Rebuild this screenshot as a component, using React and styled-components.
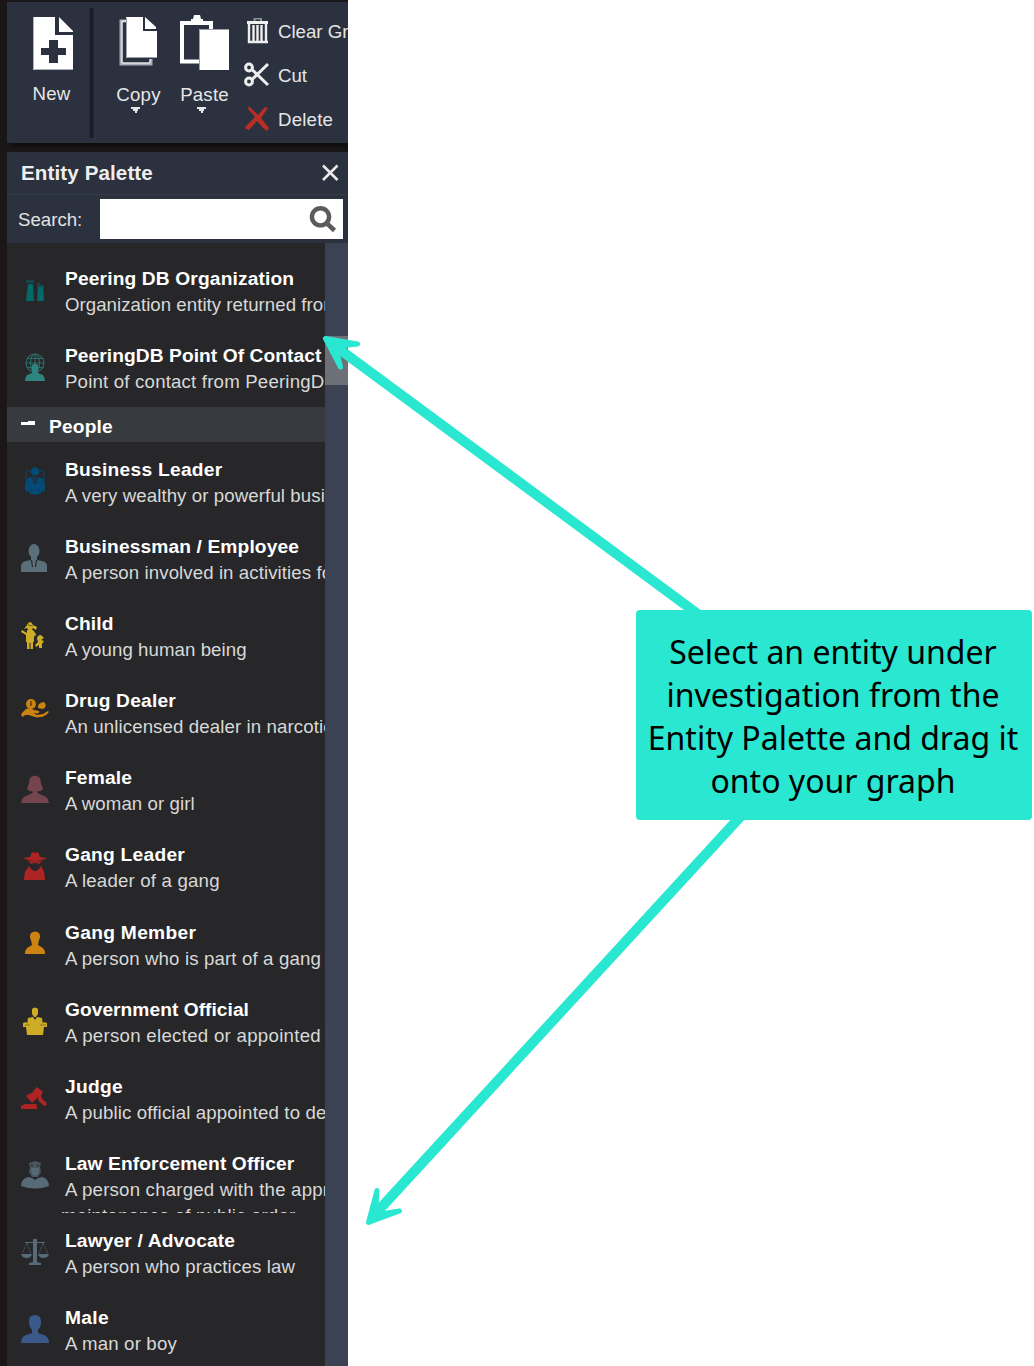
import React from "react";
import styled, { createGlobalStyle } from "styled-components";

const Global = createGlobalStyle`
  * { box-sizing: border-box; }
  body { margin: 0; background: #fff; }
`;

const Page = styled.main`
  position: relative;
  width: 1034px;
  height: 1366px;
  overflow: hidden;
  background: #fff;
  font-family: "Liberation Sans", Arial, sans-serif;
  font-size: 18.67px;
`;

const AppWindow = styled.section`
  display: flex;
  flex-direction: column;
  gap: 9px;
  width: 348px;
  height: 1366px;
  padding: 2px 0 0 7px;
  overflow: hidden;
  background: #1b1719;
`;

const Toolbar = styled.div`
  display: flex;
  flex: none;
  width: 341px;
  height: 141px;
  overflow: hidden;
  background: #2b313f;
  color: #e6e6e6;
  box-shadow: 3px 3px 5px #0c0c0f;
`;

const Tool = styled.div`
  display: flex;
  flex: none;
  flex-direction: column;
  align-items: center;
  width: ${(p) => p.$width}px;
  padding-top: 12px;
`;

const ToolLabel = styled.span`
  margin-top: ${(p) => p.$top || 0}px;
  line-height: 22px;
  letter-spacing: 0.2px;
  white-space: nowrap;
`;

const CaretBox = styled.div`
  margin: 0 7px 0 0;
  shape-rendering: crispEdges;
`;

const Divider = styled.div`
  flex: none;
  width: 5px;
  height: 130px;
  margin: 6px 14px 0 -7px;
  border: solid #232836;
  border-width: 0 1px;
  background: #191e2b;
`;

const Actions = styled.div`
  display: flex;
  flex: none;
  flex-direction: column;
  padding: 8px 0 0 3px;
`;

const Action = styled.div`
  display: flex;
  align-items: center;
  gap: 7px;
  height: 44px;
  letter-spacing: ${(p) => p.$ls || 0}px;
  white-space: nowrap;
`;

const Palette = styled.div`
  display: flex;
  flex: 1;
  flex-direction: column;
  min-height: 0;
`;

const PaletteHeader = styled.header`
  display: flex;
  align-items: center;
  justify-content: space-between;
  height: 43px;
  padding: 0 9px 1px 14px;
  border-bottom: 1px solid #353c49;
  background: #2b313f;
  color: #eee;
  font-size: 20.6px;
  font-weight: 700;
  letter-spacing: 0.1px;
`;

const SearchRow = styled.div`
  display: flex;
  align-items: center;
  justify-content: space-between;
  height: 48px;
  padding: 0 5px 0 11px;
  background: #2b313f;
  color: #e2e2e2;
`;

const SearchLabel = styled.label`
  padding-top: 2px;
`;

const SearchBox = styled.div`
  display: flex;
  align-items: center;
  justify-content: flex-end;
  width: 243px;
  height: 40px;
  margin-bottom: 1px;
  padding-right: 6px;
  background: #fff;
`;

const Body = styled.div`
  display: flex;
  flex: 1;
  min-height: 0;
`;

const List = styled.div`
  flex: none;
  width: 318px;
  padding-top: 8px;
  overflow: hidden;
  background: #272729;
`;

const ScrollTrack = styled.div`
  width: 23px;
  padding-top: 93px;
  background: #3b4253;
`;

const ScrollThumb = styled.div`
  height: 49px;
  background: #6d7077;
`;

const Row = styled.article`
  display: flex;
  height: 77.1px;
  padding-left: 14px;
  overflow: hidden;
`;

const IconCell = styled.div`
  flex: none;
  width: 28px;
  height: 28px;
  margin: 25px 16px 0 0;
  color: ${(p) => p.$color};
`;

const RowText = styled.div`
  flex: none;
  padding-top: 15px;
  white-space: nowrap;
`;

const Title = styled.div`
  color: #fff;
  font-size: 19.2px;
  font-weight: 700;
  line-height: 26px;
  letter-spacing: ${(p) => p.$ls || 0}px;
`;

const Desc = styled.div`
  color: #d8d8d8;
  line-height: 26.5px;
  letter-spacing: ${(p) => p.$ls || 0}px;
`;

const DescMore = styled(Desc)`
  margin-left: -4px;
`;

const Section = styled.div`
  display: flex;
  align-items: center;
  gap: 14px;
  height: 35px;
  margin-top: 1.8px;
  padding: 5px 0 0 14px;
  background: #373a3f;
  color: #fff;
  font-size: 19.2px;
  font-weight: 700;
  letter-spacing: 0.15px;
`;

const Arrows = styled.svg`
  position: absolute;
  top: 0;
  left: 0;
  pointer-events: none;
`;

const Callout = styled.aside`
  position: absolute;
  top: 610px;
  left: 636px;
  width: 396px;
  height: 210px;
  padding: 19.5px 2px 0 0;
  border-radius: 4px;
  background: #29e7d0;
  color: #000;
  font-family: "Noto Sans", sans-serif;
  font-size: 32px;
  line-height: 43px;
  text-align: center;
  white-space: nowrap;
`;

const Svg = ({ w = 28, h = 28, children }) => (
  <svg width={w} height={h} viewBox={`0 0 ${w} ${h}`} fill="currentColor" display="block">
    {children}
  </svg>
);

const icons = {
  factory: (
    <>
      <path d="M5 4H13V7H5ZM16 7H19L20 9H23V12H16Z" opacity=".45" />
      <path d="M7 8H12L13 25H5ZM17 11H22L23 25H16Z" />
    </>
  ),
  globePerson: (
    <>
      <g fill="none" stroke="currentColor" strokeWidth="1.2" opacity=".75">
        <circle cx="14" cy="10" r="9" />
        <ellipse cx="14" cy="10" rx="4.5" ry="9" />
        <path d="M5 10H23M6 5.500H22M6 14.500H22M14 1V19" />
      </g>
      <path d="M11 12Q14 9 17 12V20L22 22Q23.500 24 24 28H4Q4.500 24 6 22L11 20Z" />
    </>
  ),
  leader: (
    <>
      <circle cx="14" cy="4.500" r="4.300" />
      <path d="M9 4H6.500Q5 4 5 6V14M19 4H21.500Q23 4 23 6V14" fill="none" stroke="currentColor" strokeWidth="1" />
      <path d="M10 10H18V15H10Z" opacity=".5" />
      <path d="M6 12L10 10L12 15L14 17L16 15L18 10L22 12Q26 20 23 25L20 24V26L16 28L14 27L12 28L8 26V24L5 25Q2 20 6 12Z" />
      <path d="M9 21L12 24M19 21L16 24" stroke="#272729" opacity=".5" />
    </>
  ),
  employee: (
    <>
      <ellipse cx="13" cy="7" rx="5.500" ry="7" />
      <path d="M10 12H16V16L21 17Q26 18 26 22V28H0V22Q0 18 5 17L10 16Z" />
      <path d="M10.500 16L11.500 23M15.500 16L14.500 23" fill="none" stroke="#272729" strokeWidth="1.200" />
    </>
  ),
  child: (
    <>
      <path d="M6 4Q9-2 12 4L16 6L15 9L12 7L10 10H8L6 7L3 8Z" />
      <path d="M6 9H12L15 13L14 16L13 14V21H12V28H9.500V22H8.500V28H6V21H5V14L0 11L1 9L6 12Z" />
      <path d="M16 18Q16 14 20 14L23 17L20 19L23 20L21 23V27H18V24L15 26L14 24L17 21ZM22 15L24 17" />
      <path d="M7 4L12 5" stroke="#272729" opacity=".6" />
    </>
  ),
  dealer: (
    <>
      <circle cx="10" cy="6" r="5" />
      <path d="M10 3V8" stroke="#272729" strokeWidth="1.500" opacity=".75" />
      <path d="M17 10Q16 5 23 4Q27 8 22 11Z" />
      <path d="M1 15L5 11Q9 9 13 12L18 13Q19 15 16 15.500L12 15L16 17L22 16L27 13Q29 14 25 17Q21 20 14 19L8 17H4L2 19L0 17Z" />
    </>
  ),
  female: <path d="M9 3Q14-2 19 3Q20 9 22 14Q20 17 16.500 16V18L23 21Q27 22 28 28H0Q1 22 5 21L11.500 18V16Q8 17 6 14Q8 9 9 3Z" />,
  gangLeader: (
    <>
      <path d="M9 5L11 0L14 1L17 0L19 5L26 6Q21 9 14 9Q7 9 2 6Z" />
      <path d="M7 9H21L18 12L14 11L10 12Z" opacity=".85" />
      <path d="M8 14L10 17L13 19H15L18 17L20 14Q24 19 24 28H3Q3 20 6 17Z" />
    </>
  ),
  gangMember: <path d="M10 3Q14 0 18 3Q20 7 18 10L17 15L22 18Q24 20 24 24H4Q4 20 6 18L11 15L10 10Q8 7 10 3Z" />,
  official: (
    <>
      <path d="M11 2Q14-1 17 2V7L15 10H13L11 7Z" />
      <path d="M7 11L12 10L14 13L16 10L21 11L22 18H6Z" />
      <path d="M2 16L5 15L8 18H20L23 15L26 16V20H23L22 28H6L5 20H2Z" />
      <path d="M4 18H9M19 18H25" stroke="#272729" opacity=".4" />
    </>
  ),
  gavel: (
    <>
      <path d="M14 5L16 3L22 8L20 12L18 12L14 16L11 19L5 12L8 10L11 9Z" />
      <path d="M17 12L20 12L22 16L25 18L26 21L23 22L17 16ZM2 21L4 20H15L16 22V25H0V22Z" />
    </>
  ),
  officer: (
    <>
      <path d="M8 2L14 0L20 2L19 6L20 11L17 16H11L8 11L9 6Z" opacity=".7" />
      <path d="M10 7H18L17 13L14 15L11 13ZM7 16L11 17L14 19L17 17L21 16Q28 18 28 25Q14 30 0 25Q0 18 7 16Z" />
      <path d="M10 4L12 5M18 4L16 5" stroke="#272729" strokeWidth="1.300" />
    </>
  ),
  scales: (
    <>
      <path d="M12 1H16V24L20 25V27H8V25L12 24Z" />
      <g fill="none" stroke="currentColor">
        <path d="M4 4.500H24" />
        <path d="M6 5L1 16M6 5L10 16M22 5L18 16M22 5L27 16" strokeDasharray="3 1" opacity=".6" />
      </g>
      <path d="M0 16H11Q10 20 5.500 20Q1 20 0 16ZM17 16H28Q27 20 22.500 20Q18 20 17 16Z" />
    </>
  ),
  male: <path d="M9 2Q14-2 19 2Q21 7 19 12L17 15V18L23 20Q28 22 28 28H0Q0 22 5 20L11 18V15L9 12Q7 7 9 2Z" />,
};

const Entity = ({ icon, color, title, desc, more, tls, dls }) => (
  <Row>
    <IconCell $color={color}>
      <Svg>{icons[icon]}</Svg>
    </IconCell>
    <RowText>
      <Title $ls={tls}>{title}</Title>
      <Desc $ls={dls}>{desc}</Desc>
      {more && <DescMore $ls={0.15}>{more}</DescMore>}
    </RowText>
  </Row>
);

const peering = [
  { icon: "factory", color: "#006a6b", title: "Peering DB Organization", tls: 0.14, desc: "Organization entity returned from", dls: 0.03 },
  { icon: "globePerson", color: "#2e8580", title: "PeeringDB Point Of Contact", tls: 0.06, desc: "Point of contact from PeeringDB", dls: 0.18 },
];

const people = [
  { icon: "leader", color: "#034a76", title: "Business Leader", tls: 0.26, desc: "A very wealthy or powerful business", dls: 0.09 },
  { icon: "employee", color: "#5b6f7a", title: "Businessman / Employee", tls: 0.12, desc: "A person involved in activities for", dls: 0.08 },
  { icon: "child", color: "#cfac25", title: "Child", tls: 0.13, desc: "A young human being", dls: 0.06 },
  { icon: "dealer", color: "#cd8312", title: "Drug Dealer", tls: 0.2, desc: "An unlicensed dealer in narcotics", dls: 0.1 },
  { icon: "female", color: "#74444f", title: "Female", tls: 0.15, desc: "A woman or girl", dls: 0.08 },
  { icon: "gangLeader", color: "#ad2422", title: "Gang Leader", tls: 0.25, desc: "A leader of a gang", dls: 0.18 },
  { icon: "gangMember", color: "#cd8312", title: "Gang Member", tls: 0.3, desc: "A person who is part of a gang", dls: 0.13 },
  { icon: "official", color: "#cfac25", title: "Government Official", tls: 0.03, desc: "A person elected or appointed", dls: 0.28 },
  { icon: "gavel", color: "#ad2422", title: "Judge", tls: 0.28, desc: "A public official appointed to decide", dls: 0.14 },
  { icon: "officer", color: "#566b77", title: "Law Enforcement Officer", tls: 0.1, desc: "A person charged with the apprehension", dls: 0.2, more: "maintenance of public order" },
  { icon: "scales", color: "#566b77", title: "Lawyer / Advocate", tls: 0.14, desc: "A person who practices law", dls: 0.16 },
  { icon: "male", color: "#3b5988", title: "Male", tls: 0.3, desc: "A man or boy", dls: 0.17 },
];

const Caret = () => (
  <CaretBox>
    <Svg w={10} h={7}>
      <path d="M1 1H10V3H8V5H7V7H5V5H3V3H1Z" />
    </Svg>
  </CaretBox>
);

export default function App() {
  return (
    <Page>
      <Global />
      <AppWindow>
        <Toolbar>
          <Tool $width={89}>
            <Svg w={46} h={58}>
              <g fill="#fff">
                <path d="M4 3H26V21H44V56H4Z" />
                <path d="M30 3L44 17V18H30Z" />
              </g>
              <path d="M20 26H29V34H37V41H29V49H20V41H12V34H20Z" fill="#2b313f" />
              <path d="M4.500 3V55.500H44" stroke="#aeb1b7" fill="none" />
            </Svg>
            <ToolLabel $top={11}>New</ToolLabel>
          </Tool>
          <Divider />
          <Tool $width={61}>
            <Svg w={40} h={58}>
              <path d="M7 7H2V50H32V45" fill="none" stroke="#a8acb5" strokeWidth="3" />
              <path d="M7 7H3V49H31V45" fill="none" stroke="#fff" strokeWidth="1" />
              <path d="M7 3H24V17H38V44H7Z" fill="#fff" />
              <path d="M26 3L37 13V15H26Z" fill="#fff" />
              <path d="M7.500 4V43.500H38" stroke="#999ea8" fill="none" />
            </Svg>
            <ToolLabel $top={12}>Copy</ToolLabel>
            <Caret />
          </Tool>
          <Tool $width={71}>
            <Svg w={50} h={58}>
              <path d="M2 9H31V20M2 9V47.500H20" fill="none" stroke="#fff" strokeWidth="4" />
              <path d="M0 7H4V49H0Z" fill="#fff" />
              <path d="M11 7V5H13L14 1H20L21 5H23V10H11Z" fill="#fff" />
              <path d="M19 15H49V56H19Z" fill="#fff" />
              <path d="M19.500 56V15.500H49" stroke="#999ea8" fill="none" />
            </Svg>
            <ToolLabel $top={12}>Paste</ToolLabel>
            <Caret />
          </Tool>
          <Actions>
            <Action>
              <Svg w={28} h={28}>
                <path d="M11.500 4V0.500H18V4" stroke="#8b8f9b" strokeWidth="2" fill="none" />
                <path d="M4 3H25V6H4Z" fill="#f0f0f0" />
                <path d="M6 6V24H23V6M10.500 7V23M14.500 7V23M18.500 7V23M5 24H25" stroke="#eee" strokeWidth="2.400" fill="none" />
              </Svg>
              Clear Graph
            </Action>
            <Action>
              <Svg w={28} h={28}>
                <g fill="none" stroke="#eee" strokeWidth="3">
                  <circle cx="6" cy="5.500" r="3.400" />
                  <circle cx="6" cy="19.500" r="3.400" />
                  <path d="M9 7.500L25 23M9 17.500L25 2" />
                </g>
              </Svg>
              Cut
            </Action>
            <Action $ls={0.2}>
              <Svg w={28} h={28}>
                <path d="M6 0L11 5L15 9L22 1L25 2L18 12L26 22L24 25L20 22L14 15L6 24L3 23L2 21L12 11L5 3Z" fill="#b82d25" />
              </Svg>
              Delete
            </Action>
          </Actions>
        </Toolbar>
        <Palette>
          <PaletteHeader>
            Entity Palette
            <Svg w={18} h={18}>
              <path d="M2 1.500L16.500 16M16.500 1.500L2 16" stroke="#e8e8e8" strokeWidth="2.600" />
            </Svg>
          </PaletteHeader>
          <SearchRow>
            <SearchLabel>Search:</SearchLabel>
            <SearchBox>
              <Svg w={28} h={28}>
                <circle cx="11.500" cy="11.800" r="8.600" fill="none" stroke="#5b5b5b" strokeWidth="4.400" />
                <path d="M17.500 18L25.500 25.500" stroke="#5b5b5b" strokeWidth="4.500" />
              </Svg>
            </SearchBox>
          </SearchRow>
          <Body>
            <List>
              {peering.map((e) => (
                <Entity key={e.title} {...e} />
              ))}
              <Section>
                <Svg w={14} h={14}>
                  <path d="M0 2H7V1H14V5H0Z" />
                </Svg>
                People
              </Section>
              {people.map((e) => (
                <Entity key={e.title} {...e} />
              ))}
            </List>
            <ScrollTrack>
              <ScrollThumb />
            </ScrollTrack>
          </Body>
        </Palette>
      </AppWindow>
      <Arrows width="1034" height="1366" fill="#29e7d0" stroke="#29e7d0" strokeLinejoin="round">
        <path d="M335 346L712 624.500" strokeWidth="10" />
        <path d="M325.500 338.500L357.500 344L343 345.500L337 352L340.500 367Z" strokeWidth="5" />
        <path d="M377 1212L746 810.500" strokeWidth="10" />
        <path d="M368.500 1222.500L377 1190.500L376 1208L384 1213.500L399.500 1211Z" strokeWidth="5" />
      </Arrows>
      <Callout>
        Select an entity under
        <br />
        investigation from the
        <br />
        Entity Palette and drag it
        <br />
        onto your graph
      </Callout>
    </Page>
  );
}
